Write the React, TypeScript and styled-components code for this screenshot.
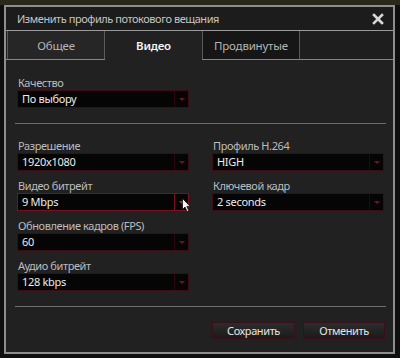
import React from "react";
import styled, {createGlobalStyle} from "styled-components";

const GlobalStyle = createGlobalStyle`
    html, body {
        margin: 0;
        padding: 0;
        width: 400px;
        height: 358px;
        overflow: hidden;
        background: linear-gradient(180deg, #2a281b 0px, #2a281b 5px, #0f0f0f 5px);
        font-family: "Noto Sans", "Open Sans", sans-serif;
    }
`;

const Dialog = styled.div`
    box-sizing: border-box;
    margin: 5px 0 0 4px;
    width: 391px;
    height: 349px;
    border: 2px solid #8e8e8e;
    background: #212121;
    display: flex;
    flex-direction: column;
    position: relative;
`;

const TitleBar = styled.div`
    height: 23px;
    display: flex;
    align-items: center;
    justify-content: space-between;
    padding: 0 9px 0 11px;
    background: #1c1c1c;
    border-bottom: 1px solid #9a9a9a;
    color: #c4c4c4;
    font-size: 11px;
    letter-spacing: -0.45px;
`;

const Close = styled.span`
    display: flex;
    width: 12px;
    height: 12px;
`;

const TabRow = styled.div`
    display: flex;
    height: 28px;
    padding-left: 1px;
    background: #1e1e1e;
    border-bottom: 1px solid #858585;
`;

const Tab = styled.div<{ $active?: boolean; $dark?: boolean }>`
    box-sizing: border-box;
    width: ${p => (p.$active ? 97 : 98)}px;
    display: flex;
    align-items: center;
    justify-content: center;
    font-size: 11.5px;
    letter-spacing: -0.2px;
    color: ${p => (p.$active ? "#f4f4f4" : "#b4b4b4")};
    font-weight: ${p => (p.$active ? 600 : 400)};
    background: ${p => (p.$active ? "#212121" : p.$dark ? "#161616" : "#262626")};
    border-left: 1px solid ${p => (p.$active ? "transparent" : "#5a5a5a")};
    border-right: 1px solid ${p => (p.$active ? "transparent" : "#5a5a5a")};
    margin-bottom: ${p => (p.$active ? "-1px" : "0")};
`;

const Body = styled.div`
    flex: 1;
    display: flex;
    flex-direction: column;
    padding: 16px 7px 0 11px;
`;

const Separator = styled.div`
    height: 1px;
    background: #6e6e6e;
    margin: 15px 0 15px -2px;
`;

const Columns = styled.div`
    display: flex;
    gap: 23px;
`;

const Column = styled.div`
    width: 172px;
    display: flex;
    flex-direction: column;
    gap: 8px;
`;

const Field = styled.div`
    display: flex;
    flex-direction: column;
`;

const Label = styled.div`
    height: 14px;
    line-height: 14px;
    padding-left: 1px;
    font-size: 11px;
    letter-spacing: -0.4px;
    color: #bcbcbc;
`;

const Select = styled.div<{ $hover?: boolean }>`
    box-sizing: border-box;
    width: 172px;
    height: 18px;
    display: flex;
    background: #050505;
    border: 1px solid ${p => (p.$hover ? "#7a1020" : "#3e0c14")};
    color: #ececec;
    font-size: 11px;
    letter-spacing: -0.3px;
    line-height: 16px;
`;

const Value = styled.div`
    flex: 1;
    padding-left: 4px;
`;

const Arrow = styled.div<{ $hover?: boolean }>`
    width: 13px;
    display: flex;
    align-items: center;
    justify-content: center;
    border-left: 1px solid ${p => (p.$hover ? "#7a1020" : "#2a080d")};
    &::after {
        content: "";
        border-left: 3px solid transparent;
        border-right: 3px solid transparent;
        border-top: 3px solid ${p => (p.$hover ? "#e3163a" : "#7c0c22")};
    }
`;

const Buttons = styled.div`
    display: flex;
    justify-content: flex-end;
    gap: 8px;
    padding-right: 1px;
`;

const Button = styled.div<{ $w: number }>`
    box-sizing: border-box;
    width: ${p => p.$w}px;
    height: 17px;
    display: flex;
    align-items: center;
    justify-content: center;
    background: linear-gradient(180deg, #2c2c2c 0%, #1b1b1b 100%);
    border: 1px solid #3a0f17;
    color: #e4e4e4;
    font-size: 11px;
    letter-spacing: -0.4px;
`;

const Cursor = styled.svg`
    position: absolute;
    left: 176px;
    top: 191px;
`;

type FieldData = {
    label: string;
    value: string;
    hover?: boolean;
};

const leftFields: FieldData[] = [
    {label: "Разрешение", value: "1920x1080"},
    {label: "Видео битрейт", value: "9 Mbps", hover: true},
    {label: "Обновление кадров (FPS)", value: "60"},
    {label: "Аудио битрейт", value: "128 kbps"},
];

const rightFields: FieldData[] = [
    {label: "Профиль H.264", value: "HIGH"},
    {label: "Ключевой кадр", value: "2 seconds"},
];

const Dropdown: React.FC<FieldData> = ({label, value, hover}) => (
    <Field>
        <Label>{label}</Label>
        <Select $hover={hover}>
            <Value>{value}</Value>
            <Arrow $hover={hover}/>
        </Select>
    </Field>
);

export default function App() {
    return (
        <>
            <GlobalStyle/>
            <Dialog>
                <TitleBar>
                    <span>Изменить профиль потокового вещания</span>
                    <Close>
                        <svg width="12" height="12" viewBox="0 0 12 12">
                            <path d="M2 2 L10 10 M10 2 L2 10" stroke="#d8d8d8" strokeWidth="2.6" strokeLinecap="square"/>
                        </svg>
                    </Close>
                </TitleBar>
                <TabRow>
                    <Tab>Общее</Tab>
                    <Tab $active>Видео</Tab>
                    <Tab $dark>Продвинутые</Tab>
                </TabRow>
                <Body>
                    <Dropdown label="Качество" value="По выбору"/>
                    <Separator/>
                    <Columns>
                        <Column>
                            {leftFields.map((f, i) => <Dropdown key={i} {...f}/>)}
                        </Column>
                        <Column>
                            {rightFields.map((f, i) => <Dropdown key={i} {...f}/>)}
                        </Column>
                    </Columns>
                    <Separator/>
                    <Buttons>
                        <Button $w={83}>Сохранить</Button>
                        <Button $w={82}>Отменить</Button>
                    </Buttons>
                </Body>
                <Cursor width="10" height="15" viewBox="0 0 10 15">
                    <path d="M0.5 0.5 L0.5 11.5 L3 9 L5 13.5 L6.8 12.7 L4.9 8.4 L8.2 8.4 Z" fill="#f4f4f4" stroke="#111" strokeWidth="0.8"/>
                </Cursor>
            </Dialog>
        </>
    );
}
